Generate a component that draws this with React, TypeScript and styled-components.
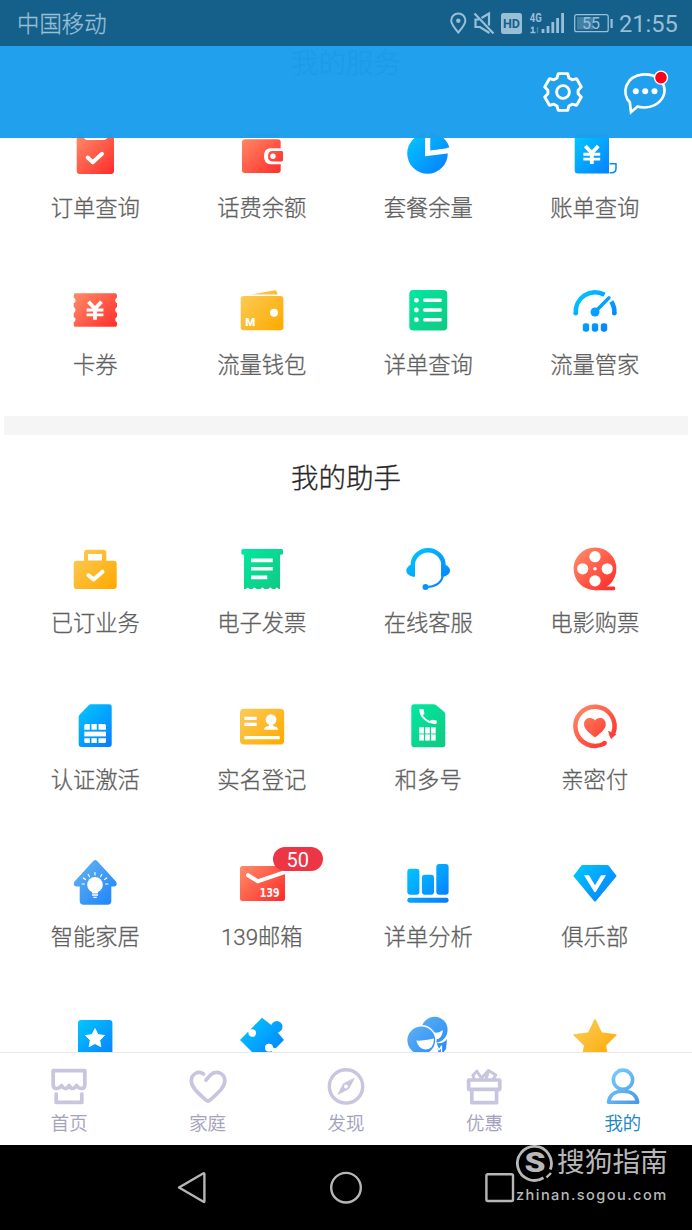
import React from 'react';
import styled, { createGlobalStyle } from 'styled-components';

const Global = createGlobalStyle`
  * { box-sizing: border-box; }
  body { margin: 0; background: #fff; font-family: Roboto, "Noto Sans CJK SC", sans-serif; }
`;

const Screen = styled.div`
  width: 692px;
  height: 1230px;
  display: flex;
  flex-direction: column;
  overflow: hidden;
  background: #fff;
`;

const StatusBar = styled.div`
  height: 46px;
  flex: none;
  display: flex;
  align-items: center;
  padding: 0 15px 0 17px;
  background: #155f8b;
  color: #98bfd6;
  position: relative;
  z-index: 3;
`;

const Carrier = styled.span`
  font-size: 22.4px;
  font-weight: 300;
  line-height: 32px;
  flex: 1;
  padding-top: 1px;
  -webkit-text-stroke: 0.3px currentColor;
`;

const StatusIcons = styled.svg`
  display: block;
  width: 170px;
  height: 46px;
`;

const Clock = styled.span`
  font-size: 23.6px;
  line-height: 32px;
  width: 58px;
  white-space: nowrap;
  padding-top: 2px;
`;

const Header = styled.header`
  height: 92px;
  flex: none;
  display: flex;
  justify-content: flex-end;
  align-items: center;
  gap: 34px;
  padding-right: 23px;
  background: rgba(27, 158, 237, 0.975);
  position: relative;
  z-index: 2;
`;

const HeaderIcon = styled.svg`
  display: block;
  width: 48px;
  height: 48px;
  fill: none;
  stroke: #fff;
`;

const Scroller = styled.main`
  flex: 1;
  min-height: 0;
  margin-top: -92px;
  overflow: hidden;
`;

const Content = styled.div`
  margin-top: -26px;
`;

const Section = styled.section`
  padding: 0 14px 36px 12px;
`;

const SectionTitle = styled.h2`
  margin: 0;
  padding: 0 0 22px 2px;
  font-size: 27.5px;
  font-weight: 300;
  line-height: 88px;
  text-align: center;
  color: #262626;
  -webkit-text-stroke: 0.3px currentColor;
`;

const Grid = styled.div`
  display: grid;
  grid-template-columns: repeat(4, 1fr);
  row-gap: 64px;
`;

const Divider = styled.div`
  height: 19px;
  margin: 0 4px;
  background: #f5f5f5;
`;

const Cell = styled.div`
  height: 93px;
  display: flex;
  flex-direction: column;
  align-items: center;
  justify-content: space-between;
`;

const IconBox = styled.div`
  position: relative;
  width: 48px;
  height: 48px;
`;

const Glyph = styled.svg`
  display: block;
  width: 48px;
  height: 48px;
  overflow: visible;
`;

const Label = styled.span`
  font-size: 22.3px;
  font-weight: 300;
  line-height: 30px;
  color: #606060;
  white-space: nowrap;
  -webkit-text-stroke: 0.3px currentColor;
`;

const Badge = styled.span`
  position: absolute;
  left: 35px;
  top: -12px;
  width: 50px;
  height: 24px;
  border-radius: 12px;
  background: #ec3545;
  color: #fff;
  font-size: 20px;
  line-height: 26px;
  text-align: center;
`;

const TabBar = styled.nav`
  height: 93px;
  flex: none;
  display: grid;
  grid-template-columns: repeat(5, 1fr);
  border-top: 1px solid #e6e8ea;
  background: #fff;
`;

const Tab = styled.div<{ $active?: boolean }>`
  display: flex;
  flex-direction: column;
  align-items: center;
  padding-top: 13px;
  gap: 5px;
  font-size: 18.4px;
  font-weight: 300;
  line-height: 26px;
  color: ${(p) => (p.$active ? '#0b7fbd' : '#a09db8')};
  -webkit-text-stroke: 0.3px currentColor;
`;

const TabIcon = styled.svg`
  display: block;
  width: 40px;
  height: 40px;
  fill: none;
  stroke: #c8c5de;
  stroke-width: 3.7;
  stroke-linejoin: round;
  stroke-linecap: round;
`;

const SystemNav = styled.div`
  height: 85px;
  flex: none;
  position: relative;
  display: flex;
  justify-content: center;
  gap: 114px;
  padding-top: 22px;
  background: #000;
`;

const NavIcon = styled.svg`
  display: block;
  width: 40px;
  height: 40px;
  fill: none;
  stroke: #b6b6b6;
  stroke-width: 2.4;
  stroke-linejoin: round;
`;

const Watermark = styled.div`
  position: absolute;
  left: 516px;
  top: 0;
  width: 160px;
  color: #b8b8b8;
`;

const WatermarkTop = styled.div`
  display: flex;
  align-items: center;
  gap: 3px;
  height: 36px;
  font-size: 27.7px;
  line-height: 36px;
  white-space: nowrap;
`;

const WatermarkUrl = styled.div`
  font-family: Inter, "Liberation Sans", sans-serif;
  font-size: 14.6px;
  font-weight: 500;
  line-height: 20px;
  letter-spacing: 1.42px;
  padding-top: 4px;
  white-space: nowrap;
`;

const WatermarkLogo = styled.svg`
  display: block;
  width: 38px;
  height: 38px;
  flex: none;
`;

const palette: Record<string, [string, string]> = {
  red: ['#ff8b68', '#ff2d2b'],
  blue: ['#00c8ff', '#087cff'],
  yellow: ['#fbcb58', '#ffaa00'],
  green: ['#00e89f', '#12c983'],
  sky: ['#62b2f2', '#1f86fa'],
};

const Gradients = styled.svg`
  position: absolute;
  width: 0;
  height: 0;
`;

const fill = (name: string) => `url(#g-${name})`;

const white = {
  fill: 'none',
  stroke: '#fff',
  strokeLinecap: 'round' as const,
  strokeLinejoin: 'round' as const,
};

function starPath(cx: number, cy: number, outer: number, inner: number) {
  return (
    Array.from({ length: 10 }, (_, i) => {
      const r = i % 2 ? inner : outer;
      const a = (Math.PI / 5) * i;
      return `${i ? 'L' : 'M'}${(cx + r * Math.sin(a)).toFixed(2)} ${(cy - r * Math.cos(a)).toFixed(2)}`;
    }).join('') + 'Z'
  );
}

function gearPath() {
  const pts: string[] = [];
  for (let k = 0; k < 6; k++) {
    [[-23, 15.2], [-14.5, 19], [14.5, 19], [23, 15.2]].forEach(([d, r]) => {
      const a = ((k * 60 + d) * Math.PI) / 180;
      pts.push(`${(24 + r * Math.sin(a)).toFixed(2)} ${(24 - r * Math.cos(a)).toFixed(2)}`);
    });
  }
  return `M${pts.join('L')}Z`;
}

const Yen = ({ x, y }: { x: number; y: number }) => (
  <g {...white} strokeWidth="3.8" strokeLinecap="butt">
    <path d={`M${x - 6.5} ${y - 8.5}L${x} ${y - 1.5}L${x + 6.5} ${y - 8.5}M${x} ${y - 2}V${y + 9.5}`} />
    <path d={`M${x - 8.4} ${y - 0.3}H${x + 8.4}M${x - 8.4} ${y + 4.6}H${x + 8.4}`} strokeWidth="2.9" />
  </g>
);

const icons: Record<string, React.ReactNode> = {
  order: (
    <>
      <rect x="5.7" y="4" width="37.3" height="40" rx="3" fill={fill('red')} />
      <path d="M12.4 4V7.5L15 10H34L36.8 7.5V4Z" fill="#fff" />
      <path d="M16.7 27.5L21.8 32.2L31 23.8" {...white} strokeWidth="4" />
    </>
  ),
  balance: (
    <>
      <path d="M7 7L9 4H40L41 7Z" fill={fill('red')} />
      <rect x="4" y="9.3" width="38.7" height="33.7" rx="3" fill={fill('red')} />
      <path d="M46 18.3H32Q26 19 26 26.3T32 34.3H46Z" fill="#fff" />
      <path d="M43.7 21H34.5Q30 21 30 26.2T34.5 31.4H43.7Q45 31.4 45 30V22.4Q45 21 43.7 21Z" fill={fill('red')} />
      <circle cx="35" cy="26.3" r="2.7" fill="#fff" />
    </>
  ),
  plan: (
    <>
      <circle cx="23.5" cy="23.5" r="20.3" fill={fill('blue')} />
      <path d="M23.7 0V23.4L47 20.3" fill="none" stroke="#fff" strokeWidth="5.2" />
      <path d="M26.8 4L39.5 8Q44.5 13 45.3 17.6L26.8 20.3Z" fill={fill('blue')} />
    </>
  ),
  bill: (
    <>
      <path d="M3.7 4H38V43.5H7Q3.7 43.5 3.7 40.5Z" fill={fill('blue')} />
      <path d="M38.6 33.7H45V38.5Q45 42.7 40.5 42.7H38.6" fill="#fff" stroke="#0788ff" strokeWidth="1.5" />
      <Yen x={20.8} y={24.5} />
    </>
  ),
  coupon: (
    <>
      <path
        d="M4 6.3H44.7Q46 6.3 46 9V10.5A3.2 3.2 0 0 0 46 16.3V20A3.4 3.4 0 0 0 46 26V29.7A3.2 3.2 0 0 0 46 35.5V37.5Q46 39.8 44.7 39.8H4Q2.7 39.8 2.7 37.5V35.5A3.2 3.2 0 0 0 2.7 29.7V26A3.4 3.4 0 0 0 2.7 20V16.3A3.2 3.2 0 0 0 2.7 10.5V9Q2.7 6.3 4 6.3Z"
        fill={fill('red')}
      />
      <Yen x={24} y={23.3} />
    </>
  ),
  purse: (
    <>
      <path d="M13.3 7.5L37 3.2Q38 3 38.4 4L39.7 7.5Z" fill={fill('yellow')} />
      <rect x="2.7" y="9" width="42.7" height="34.3" rx="3" fill={fill('yellow')} />
      <circle cx="36" cy="25.7" r="4" fill="#fff" />
      <text x="7.2" y="39" fontSize="11.5" fontWeight="900" fontFamily="Roboto, sans-serif" fill="#fff">M</text>
    </>
  ),
  list: (
    <>
      <rect x="5.3" y="3" width="38" height="40.4" rx="4" fill={fill('green')} />
      {[13.3, 23, 32.7].map((y) => (
        <g key={y} fill="#fff">
          <circle cx="12.4" cy={y} r="2.4" />
          <rect x="19.3" y={y - 1.8} width="18.4" height="3.6" rx="1" />
        </g>
      ))}
    </>
  ),
  gauge: (
    <>
      <g fill="none" stroke={fill('blue')} strokeWidth="4.6">
        <path d="M4.8 26.5A19.3 19.3 0 0 1 33.5 7.8" />
        <path d="M40.3 14.4A19.3 19.3 0 0 1 43.3 26.5" />
        <path d="M24 25L38 10.8" strokeWidth="3.4" strokeLinecap="round" />
      </g>
      <g fill={fill('blue')}>
        <circle cx="24" cy="25" r="4.5" />
        <circle cx="4.8" cy="26.3" r="2.3" />
        <circle cx="43.3" cy="26.3" r="2.3" />
        <rect x="11.8" y="36.2" width="6.4" height="8.5" rx="2.4" />
        <rect x="20.8" y="36.2" width="6.4" height="8.5" rx="2.4" />
        <rect x="29.8" y="36.2" width="6.4" height="8.5" rx="2.4" />
      </g>
    </>
  ),
  briefcase: (
    <>
      <path
        d="M16 4.7H32.3Q35.3 4.7 35.3 7.7V15.7H42.7Q45.7 15.7 45.7 18.7V41Q45.7 44 42.7 44H5.7Q2.7 44 2.7 41V18.7Q2.7 15.7 5.7 15.7H13V7.7Q13 4.7 16 4.7ZM17 9V15.4H31V9Z"
        fillRule="evenodd"
        fill={fill('yellow')}
      />
      <path d="M17.5 30.3L22.6 34.4L31.5 26.7" {...white} strokeWidth="4" />
    </>
  ),
  invoice: (
    <>
      <path
        d="M5 4H43.5Q45 4 45 5.5V8.3Q45 9.8 42 9.8V44H40.7Q39 40.8 37 44H34.3Q32.3 40.8 30.3 44H26.5Q24.5 40.8 22.5 44H18.5Q16.5 40.8 14.5 44H11.5Q9.5 40.8 8 44H6V9.8Q3.3 9.8 3.3 8.3V5.5Q3.3 4 5 4Z"
        fill={fill('green')}
      />
      <path d="M13 15.4H34.8M13 23.8H34.8M13 32.4H29.3" stroke="#fff" strokeWidth="3.6" />
    </>
  ),
  headset: (
    <>
      <path d="M8.7 30V20.6A15.4 15.4 0 0 1 39.5 20.6V30" fill="none" stroke={fill('blue')} strokeWidth="4.5" />
      <path d="M11 19.3V31.7H9Q2.3 30 2.3 25.5T9 19.3Z" fill={fill('blue')} />
      <path d="M37 19.3V31.7H39Q46 30 46 25.5T39 19.3Z" fill={fill('blue')} />
      <path d="M39 31Q36 42 22.5 42" fill="none" stroke={fill('blue')} strokeWidth="2" />
      <circle cx="21.5" cy="42" r="3" fill={fill('blue')} />
    </>
  ),
  reel: (
    <>
      <circle cx="24" cy="23.8" r="21.4" fill={fill('red')} />
      <path d="M24 41.5H43Q44.2 41.5 44.2 43.4T43 45.2H24Z" fill={fill('red')} />
      <g fill="#fff">
        <circle cx="24" cy="11.7" r="5.6" />
        <circle cx="11.7" cy="23.8" r="5.6" />
        <circle cx="36.2" cy="23.8" r="5.6" />
        <circle cx="24" cy="35.8" r="5.6" />
        <circle cx="24" cy="23.8" r="1.8" />
      </g>
    </>
  ),
  sim: (
    <>
      <path d="M20 2.3H38Q40.7 2.3 40.7 5V42.3Q40.7 45 38 45H10.4Q7.7 45 7.7 42.3V15Q7.7 13.5 9 12.2L17.5 3.4Q18.6 2.3 20 2.3Z" fill={fill('blue')} />
      <g fill="#fff">
        <path d="M15 22H18.8V27.7H13.3V23.5Q13.3 22 15 22Z" />
        <rect x="20.4" y="22" width="5.4" height="5.7" />
        <path d="M27.5 22H33.4Q35 22 35 23.5V27.7H27.5Z" />
        <rect x="13.3" y="29.6" width="21.7" height="4.8" />
        <path d="M13.3 36.2H18.8V41H15Q13.3 41 13.3 39.5Z" />
        <rect x="20.4" y="36.2" width="5.4" height="4.8" />
        <path d="M27.5 36.2H35V39.5Q35 41 33.4 41H27.5Z" />
      </g>
    </>
  ),
  idcard: (
    <>
      <rect x="2" y="6.7" width="44.2" height="35.7" rx="4" fill={fill('yellow')} />
      <path d="M6.3 16.3H18.7M6.3 22.3H18.7M6.3 35.7H41.7" stroke="#fff" strokeWidth="3.2" />
      <circle cx="33" cy="17.7" r="5.4" fill="#fff" />
      <path d="M31 22H35V24Q40 24.5 40 27.8H26Q26 24.5 31 24Z" fill="#fff" />
    </>
  ),
  multi: (
    <>
      <path d="M10.3 2.3H29.5Q31 2.3 32 3.1L40 9.8Q41.3 11 41.3 12.5V42.5Q41.3 45.3 38.3 45.3H10.3Q7.3 45.3 7.3 42.3V5.3Q7.3 2.3 10.3 2.3Z" fill={fill('green')} />
      <path d="M15.4 7L19.5 7.2L20.5 11.5L18.8 13.5Q22 17.5 25.6 19L28 17.7L32.7 18.5L32.6 21.8Q25 22.5 19.5 17Q15 12.5 15.4 7Z" fill="#fff" />
      <g fill="#fff">
        {[25.3, 32.4].map((y) =>
          [15.2, 21.1, 27].map((x) => <rect key={`${x}-${y}`} x={x} y={y} width="4.7" height="6.2" />)
        )}
      </g>
    </>
  ),
  heart: (
    <>
      <path d="M34 41.1A19.6 19.6 0 1 1 42.3 31.2" fill="none" stroke={fill('red')} strokeWidth="4.5" />
      <circle cx="33.6" cy="41" r="2.3" fill={fill('red')} />
      <path d="M37.2 28.8L45.4 32.2L40 37Q37.8 34 37.2 28.8Z" fill={fill('red')} />
      <path d="M24 18.5C26 14.6 34.8 14.6 34.8 22.3C34.8 27.5 29 31.5 25 34.7Q24 35.4 23 34.7C19 31.5 13 27.5 13 22.3C13 14.6 22 14.6 24 18.5Z" fill={fill('red')} />
    </>
  ),
  home: (
    <>
      <path
        d="M22.3 2Q24.3 0.2 26.2 2L45 22.5Q47 26.4 43.5 27.4H40.3V41.7Q40.3 45.7 36.3 45.7H12.7Q8.7 45.7 8.7 41.7V27.4H5Q1.5 26.4 3.5 22.5Z"
        fill={fill('sky')}
      />
      <circle cx="24" cy="25.8" r="7.8" fill="#fff" />
      <path d="M20.5 31H27.5L26.8 34.5H21.2Z" fill="#fff" />
      <path d="M21 36H27M22.3 38.3H25.7" stroke="#fff" strokeWidth="1.3" />
      <path d="M24 13.5V16M17.2 15.5L18.5 17.7M30.8 15.5L29.5 17.7M12.3 19L14.5 20.5M35.7 19L33.5 20.5M11 25H13.5M37 25H34.5" {...white} strokeWidth="1.2" />
    </>
  ),
  mail: (
    <>
      <rect x="2" y="7" width="45" height="35" rx="2.5" fill={fill('red')} />
      <path d="M10 16.2L19.7 22.3L47.5 12.8" {...white} strokeWidth="4" strokeLinejoin="miter" />
      <text x="21.8" y="38" fontSize="11.5" fontWeight="700" fontFamily="'DejaVu Sans', sans-serif" fill="#fff" textLength="19.8" lengthAdjust="spacingAndGlyphs">139</text>
    </>
  ),
  chart: (
    <g fill={fill('blue')}>
      <rect x="3.3" y="9.7" width="12.1" height="26" rx="3" />
      <rect x="17.9" y="15.7" width="12.1" height="20" rx="3" />
      <rect x="32.3" y="5" width="12.3" height="30.7" rx="3" />
      <rect x="3.3" y="38.8" width="41.3" height="4.9" rx="2.4" />
    </g>
  ),
  club: (
    <>
      <path d="M12 6H36Q37.3 6 38 7L45.7 17L25 42Q24 43.2 23 42L2.3 17L10 7Q10.7 6 12 6Z" fill={fill('blue')} />
      <path d="M13 16.2H18L24 26.3L30 16.2H35L25 32.5Q24 34 23 32.5Z" fill="#fff" />
    </>
  ),
  bookmark: (
    <>
      <rect x="7" y="4" width="34.4" height="42" rx="3" fill={fill('blue')} />
      <path d={starPath(24, 22.6, 10, 5)} fill="#fff" stroke="#fff" strokeWidth="0.8" strokeLinejoin="round" />
    </>
  ),
  puzzle: (
    <>
      <path d="M24 1.8L34 9.5L46 24L24 46L2 24Z" fill={fill('blue')} />
      <path d="M28 5.5L34.5 11L39 18L43 21L34 30L20 14Z" fill={fill('blue')} />
      <circle cx="38.8" cy="10.7" r="5.7" fill={fill('blue')} />
      <path d="M33 12L36 8L42 15L38 18Z" fill={fill('blue')} />
      <circle cx="14.3" cy="17" r="3.8" fill="#fff" />
      <path d="M8 14.5L10.5 11.5L14.5 15L12.5 18Z" fill="#fff" />
      <circle cx="31" cy="31.7" r="4" fill="#fff" />
      <path d="M32 34L37 38L39 33L34 31Z" fill="#fff" />
    </>
  ),
  faces: (
    <>
      <circle cx="30.6" cy="13.8" r="13" fill={fill('sky')} />
      <path d="M29 16Q34 18 39 14Q38 23 32 23.5Z" fill="#fff" />
      <path d="M33 27Q40 28 43 23L42 33L35 42Z" fill={fill('sky')} />
      <circle cx="17.3" cy="24.3" r="14.6" fill={fill('sky')} stroke="#fff" strokeWidth="1.4" />
      <path d="M12.3 24.6Q20 25 30 22.6Q30 33.5 21.5 33.5Q14.5 33.5 12.3 24.6Z" fill="#fff" />
      <path d="M31.5 34L33 30L35 34L37.5 30V36" {...white} strokeWidth="1.3" />
    </>
  ),
  star: <path d={starPath(24, 25.8, 22, 10.8)} fill={fill('yellow')} stroke={fill('yellow')} strokeWidth="1.5" strokeLinejoin="round" />,
};

interface Item {
  icon: string;
  label: string;
  badge?: string;
}

const services: Item[] = [
  { icon: 'order', label: '订单查询' },
  { icon: 'balance', label: '话费余额' },
  { icon: 'plan', label: '套餐余量' },
  { icon: 'bill', label: '账单查询' },
  { icon: 'coupon', label: '卡券' },
  { icon: 'purse', label: '流量钱包' },
  { icon: 'list', label: '详单查询' },
  { icon: 'gauge', label: '流量管家' },
];

const helpers: Item[] = [
  { icon: 'briefcase', label: '已订业务' },
  { icon: 'invoice', label: '电子发票' },
  { icon: 'headset', label: '在线客服' },
  { icon: 'reel', label: '电影购票' },
  { icon: 'sim', label: '认证激活' },
  { icon: 'idcard', label: '实名登记' },
  { icon: 'multi', label: '和多号' },
  { icon: 'heart', label: '亲密付' },
  { icon: 'home', label: '智能家居' },
  { icon: 'mail', label: '139邮箱', badge: '50' },
  { icon: 'chart', label: '详单分析' },
  { icon: 'club', label: '俱乐部' },
  { icon: 'bookmark', label: '' },
  { icon: 'puzzle', label: '' },
  { icon: 'faces', label: '' },
  { icon: 'star', label: '' },
];

const tabs = [
  {
    label: '首页',
    icon: (
      <>
        <path d="M4.2 4.7H35.8V19Q35.8 22.5 32.5 22.5Q29.5 22.5 27.5 19.5Q25.5 22.5 23.7 22.5Q21.7 22.5 20 19.5Q18.3 22.5 16.3 22.5Q14.5 22.5 12.5 19.5Q10.5 22.5 7.5 22.5Q4.2 22.5 4.2 19Z" />
        <path d="M7.2 28V36.4H32.8V28" />
      </>
    ),
  },
  {
    label: '家庭',
    icon: <path d="M15.5 8C10 4.3 3.3 8 3.3 15C3.3 21 9 26 18 34.2Q20 36 22 34.2C31 26 36.8 21 36.8 15C36.8 6.5 27.5 3.8 22.5 9Q20 11.5 18 14.2" />,
  },
  {
    label: '发现',
    icon: (
      <>
        <circle cx="20" cy="20.4" r="16.7" strokeWidth="3.4" />
        <path d="M28 12.7L22.8 22.7L12 28.3L17.3 18Z" fill="#c8c5de" strokeWidth="0.9" />
        <circle cx="20" cy="20.4" r="2" fill="#fff" stroke="none" />
      </>
    ),
  },
  {
    label: '优惠',
    icon: (
      <>
        <rect x="4.6" y="14" width="31.2" height="9.4" rx="0.5" />
        <path d="M7.8 24V36.7H32.6V24" />
        <path d="M18 13L12.8 5.2L8.8 9.5L10.3 13M16.5 13L24.5 4.5L31.8 9L29.3 13M24.5 5L22 13" strokeWidth="3" />
      </>
    ),
  },
  {
    label: '我的',
    active: true,
    icon: (
      <g stroke="url(#g-me)" strokeWidth="3.6">
        <circle cx="20" cy="13.7" r="9.6" />
        <path d="M5.5 36.3Q7 25.3 20 25.3T34.7 36.3Z" />
      </g>
    ),
  },
];

const ItemGrid = ({ items }: { items: Item[] }) => (
  <Grid>
    {items.map((it) => (
      <Cell key={it.icon}>
        <IconBox>
          <Glyph viewBox="0 0 48 48">{icons[it.icon]}</Glyph>
          {it.badge && <Badge>{it.badge}</Badge>}
        </IconBox>
        {it.label && <Label>{it.label}</Label>}
      </Cell>
    ))}
  </Grid>
);

export default function App() {
  return (
    <>
      <Global />
      <Gradients aria-hidden>
        <defs>
          {Object.entries(palette).map(([name, [from, to]]) => (
            <linearGradient key={name} id={`g-${name}`} gradientUnits="userSpaceOnUse" x1="5" y1="5" x2="43" y2="43">
              <stop offset="0" stopColor={from} />
              <stop offset="1" stopColor={to} />
            </linearGradient>
          ))}
          <linearGradient id="g-me" gradientUnits="userSpaceOnUse" x1="5" y1="4" x2="36" y2="38">
            <stop offset="0" stopColor="#7cd0ff" />
            <stop offset="1" stopColor="#4797e4" />
          </linearGradient>
        </defs>
      </Gradients>
      <Screen>
        <StatusBar>
          <Carrier>中国移动</Carrier>
          <StatusIcons viewBox="449 0 170 46" fill="none" stroke="#98bfd6">
            <path d="M458.3 32.5C454 27.5 451.2 24 451.2 20.5A7.1 7.1 0 0 1 465.4 20.5C465.4 24 462.6 27.5 458.3 32.5Z" strokeWidth="2" />
            <circle cx="458.3" cy="20.7" r="2.2" fill="#98bfd6" stroke="none" />
            <path d="M479 19.5H475.5V27H480L489.5 33M481.5 18L489 13.5V25.5M474.5 13.5L493.5 33.5" strokeWidth="2.2" />
            <rect x="501" y="13" width="21" height="21" rx="2.5" fill="#98bfd6" stroke="none" />
            <text x="503" y="28.2" fontSize="12.5" fontWeight="700" fontFamily="Roboto" fill="#155f8b" stroke="none" textLength="17" lengthAdjust="spacingAndGlyphs">HD</text>
            <text x="529.8" y="22.3" fontSize="12" fontWeight="700" fontFamily="Roboto" fill="#98bfd6" stroke="none" textLength="12" lengthAdjust="spacingAndGlyphs">4G</text>
            <path d="M533 26.5V33M531 28.5L533 27M530.5 32.5H535.5" strokeWidth="1.5" />
            <path d="M537.5 27V33" strokeWidth="1.3" strokeOpacity="0.45" />
            <path d="M543 29V33M548 26V33M552.8 22V33M557.6 18V33M562.6 13V33" strokeWidth="2.8" />
            <rect x="574.7" y="14.7" width="33.5" height="17" rx="2" strokeWidth="1.3" />
            <rect x="577" y="17" width="16" height="12.5" fill="#98bfd6" fillOpacity="0.35" stroke="none" />
            <path d="M611.6 19V28" strokeWidth="2.2" />
            <text x="582" y="29.3" fontSize="16" fontFamily="Roboto" fill="#98bfd6" stroke="none">55</text>
          </StatusIcons>
          <Clock>21:55</Clock>
        </StatusBar>
        <Header>
          <HeaderIcon viewBox="0 0 48 48" strokeWidth="2.9" strokeLinejoin="round">
            <path d={gearPath()} />
            <circle cx="24" cy="24" r="6.4" />
          </HeaderIcon>
          <HeaderIcon viewBox="0 0 48 48" strokeWidth="2.7">
            <path d="M8.8 34.3C0.5 26 3.5 8 22.5 6.3C50 5.5 50.5 37.5 24 39.5Q19 39.6 16.5 38.6L10 44.2Z" strokeLinejoin="miter" />
            <g fill="#fff" stroke="none">
              <circle cx="14.8" cy="23.2" r="3" />
              <circle cx="24.2" cy="23.2" r="3" />
              <circle cx="33.5" cy="23.2" r="3" />
            </g>
            <circle cx="40" cy="9.6" r="6.5" fill="#ff0018" strokeWidth="1.4" />
          </HeaderIcon>
        </Header>
        <Scroller>
          <Content>
            <Section>
              <SectionTitle>我的服务</SectionTitle>
              <ItemGrid items={services} />
            </Section>
            <Divider />
            <Section>
              <SectionTitle>我的助手</SectionTitle>
              <ItemGrid items={helpers} />
            </Section>
          </Content>
        </Scroller>
        <TabBar>
          {tabs.map((t) => (
            <Tab key={t.label} $active={t.active}>
              <TabIcon viewBox="0 0 40 40">{t.icon}</TabIcon>
              <span>{t.label}</span>
            </Tab>
          ))}
        </TabBar>
        <SystemNav>
          <NavIcon viewBox="0 0 40 40">
            <path d="M7 20.5L31.5 6.3Q32.4 6 32.4 7V34.3Q32.4 35.3 31.5 34.8Z" />
          </NavIcon>
          <NavIcon viewBox="0 0 40 40">
            <circle cx="20" cy="20.7" r="14.8" />
          </NavIcon>
          <NavIcon viewBox="0 0 40 40">
            <rect x="6.4" y="7.2" width="26.6" height="26.8" rx="1.5" />
          </NavIcon>
          <Watermark>
            <WatermarkTop>
              <WatermarkLogo viewBox="0 0 38 38">
                <path d="M27.5 33.8A17 17 0 1 1 34.3 25.5" fill="none" stroke="#b8b8b8" strokeWidth="2.8" />
                <path d="M30.5 33.5L35 29" stroke="#b8b8b8" strokeWidth="2.4" />
                <text x="19" y="28.4" textAnchor="middle" fontSize="27" fontWeight="900" fontFamily="Roboto, sans-serif" fill="#b8b8b8" textLength="21" lengthAdjust="spacingAndGlyphs">S</text>
              </WatermarkLogo>
              搜狗指南
            </WatermarkTop>
            <WatermarkUrl>zhinan.sogou.com</WatermarkUrl>
          </Watermark>
        </SystemNav>
      </Screen>
    </>
  );
}
